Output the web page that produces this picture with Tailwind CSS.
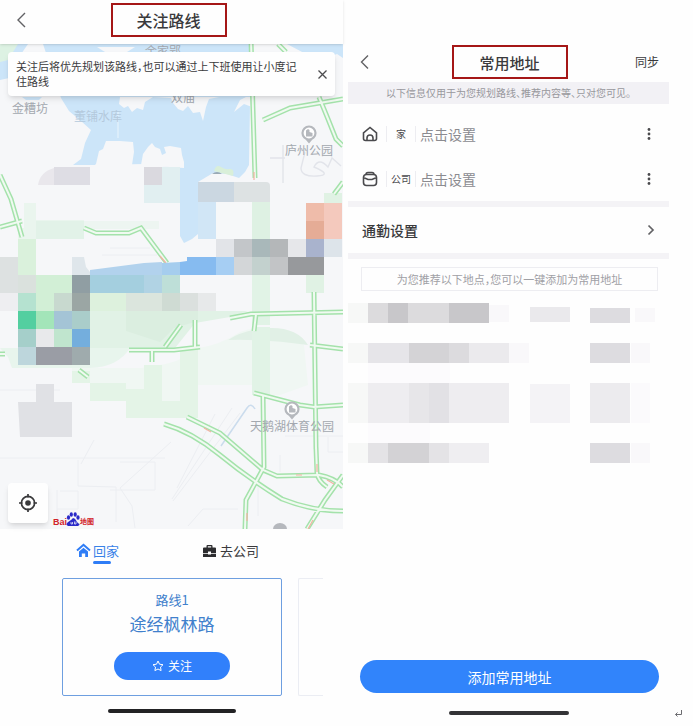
<!DOCTYPE html>
<html lang="zh-CN">
<head>
<meta charset="utf-8">
<meta name="viewport" content="width=device-width, initial-scale=1">
<title>关注路线 · 常用地址</title>
<script src="https://cdn.jsdelivr.net/npm/@tailwindcss/browser@4"></script>
</head>
<body class="bg-[#fefefe] text-[#3a3a3c] font-['Noto_Sans_CJK_SC',sans-serif] [font-feature-settings:'halt']">
<div class="grid grid-cols-[343fr_350fr] min-h-screen">

  <!-- Follow a route -->
  <main class="flex flex-col min-w-0">
    <header class="relative z-10 grid grid-cols-[1fr_auto_1fr] items-center h-11 pl-4 pr-[22px] pb-1 bg-[#fefefe] shadow-sm">
      <button aria-label="返回" class="justify-self-start">
        <svg class="w-3 h-4" viewBox="0 0 12 16" fill="none" stroke="#626265" stroke-width="1.4"><path d="M9 1 2 8l7 7"/></svg>
      </button>
      <h1 class="w-29 h-[34px] flex items-center justify-center border-2 border-[#a51717] text-base leading-none font-medium">关注路线</h1>
    </header>

    <section class="relative" aria-label="地图">
      <svg class="block w-full h-auto" viewBox="0 44 343 485">
        <rect y="44" width="343" height="485" fill="#f6f7f9"/>
        <!-- water -->
        <g fill="#cce5f9">
          <path d="M43 44H252V97l-2 8-1 60-4 7-6 6-12-4-14-1-15 9v52l-6 5-8 4-4-7V168l-36-4-48 1H73l8-6 4-16 6-13-10-9-12-10-8-13Z"/>
          <path d="M0 44h28L17 60 9 78 0 80Z"/>
          <path d="M22 97h20l-3 3H26Z"/>
          <path d="M287 44h56v14l-6-4-8 3-6 5-11-8-8-1Z"/>
        </g>
        <path d="M0 44h18L8 60 0 62Z" fill="#ddf2e3"/>
        <g fill="#f6f7f9">
          <path d="M91 168 96 164 99 151 103 149 106 141 120 141 133 142 134 152 132 165Z"/>
          <path d="M141 165 143 154 148 147 152 143 155 147 160 149 162 155 166 153 164 147 170 146 181 148 182 155 184 162 184 168Z"/>
          <path d="M82 97h38l-1 7 5 4 4-2 4 6 5-4 6 2 2-8 8-5 18 1 2 5 5 6 5 2 5-5 5 7 7-1 3 9 3-14 3-8 10-2H82Z"/>
          <path d="M234 112l6-12 6-3h6v10l-8-3Z"/>
          <path d="M97 47l38 0-8 5H105Z"/>
        </g>
        <path d="M118 112v26" stroke="#eaf5fc"/>
        <path d="M214 171q2-7 7-4t8 2q6-1 4 7Z" fill="#d9efd9"/>
        <path d="M212 174q5-4 10 0" fill="#9aaab5"/>

        <!-- minor streets -->
        <g fill="none" stroke="#eceef2">
          <path d="M0 458h165M78 460v26l38 1v35M120 462h35v28h-45M57 490v36M60 491h18v18H57M171 442 120 488l12 18 3 22M232 408l-60 91M240 413l-67 88M188 526l15-17h35M215 414l-38 74M94 440l-13 24M0 390h60M285 436h58M258 478v38M280 455v17M328 437v15h15M102 255h55M110 248h40"/>
          <path d="M305 152l-4 16q0 9 16 8t-3-9q5-10 14 0l4-9 9 8M270 158h15M283 145v38" stroke="#e2e4ea" stroke-width="1.4"/>
        </g>
        <path d="m221 446 26-38q4-6 8 1" fill="none" stroke="#cbdced" stroke-width="1.5"/>

        <!-- green fields -->
        <path d="M24 203h12v17h48v19H36v18H18v-29h6Z" fill="#eaf5ee"/>
        <path d="M36 221h48v18H36Z" fill="#e2f2e8"/>
        <path d="M84 221h75v8H84Z" fill="#edf5f1"/>
        <path d="M18 239h18v36H18Z" fill="#daf1dc"/>
        <path d="M0 348h130q-12 19-40 20H12L8 357Z" fill="#e8f5ed"/>
        <path d="M90 293h108l18 18h32l-18 6-35 6-20 25H90Z" fill="#e1f2e6"/>
        <path d="M126 311h72v10l-24 7-14 14-34-11Z" fill="#dbeee0"/>
        <path d="M150 366q30-2 48-18 22-3 42-16 30-12 64 13l4 40-28 10h-28v-10h-54v10h-18v20h-54v-17H90v-20H72v-10h70Z" fill="#f0f7f3"/>
        <path d="M228 340q15-10 41-12 28-1 39 17-40-6-80-5Z" fill="#e1f0e6"/>
        <path d="M72 371h18v12H72ZM90 383h36v18H90ZM126 389h36v29h-36ZM162 401h36v17h-36ZM180 348h18v53h-18ZM144 365h18v24h-18Z" fill="#e4f4e7"/>
        <path d="M252 275h18v50h-18ZM252 327h18v68h-18Z" fill="#e1f3e6"/>
        <path d="M306 275h18v18h-18ZM324 193h18v12h-18Z" fill="#e0f2e4"/>

        <!-- roads: coloured casing under a light centre line -->
        <defs>
          <g id="roads">
            <path d="M251 40 253 110 255 178M278 44l8 8M263 120 290 108 343 99M319 97l9 22 8 20 7 7M343 182l-9 12M0 175l11 24 11 38M0 227l22-6M84 228l12 5h33l12-5 26 35M230 318 251 314 343 312M314 292l2 157M256 314l-2 17M195 320v28M129 350h45l26-3M181 325l-16 22M152 351v11M0 354h5M79 370l9 7M310 345l33 4M316 447l1 26q1 8 10 14M254 393l46 12 14 2 29-2M263 395l1 72-18 33-1 29M164 424q28 8 56 31t62 44q30 12 61 12M187 417l33 16 43 37 14 6 42-1q16 3 24 12M343 475l-18 25-18 29"/>
          </g>
        </defs>
        <use href="#roads" fill="none" stroke="#a4e2ab" stroke-width="5"/>
        <use href="#roads" fill="none" stroke="#f0faf1" stroke-width="2"/>
        <g fill="none" stroke="#f2b2a3" stroke-width="1.200">
          <path d="M160 256l6 7M204 428l7 4M296 475h6M317 464v8M327 480l7 4M254 172v8M313 520l-5 9M247 513v8"/>
        </g>

        <!-- blurred mosaic cells -->
        <path d="M38 185q2-13 16-17v17Z" fill="#e9e7ec"/>
        <path d="M54 167h36v18H54Z" fill="#dedde4"/>
        <path d="M144 167h18v18h-18Z" fill="#dad9df"/>
        <path d="M162 167h18v36h-36v-18h18Z" fill="#e1eff1"/>
        <path d="M198 182h36v20h-36Z" fill="#cbd7e1"/>
        <path d="M234 182h32q4 0 4 4v16h-36Z" fill="#dde2e3"/>
        <path d="M198 202h18v37h-18Z" fill="#d1e6f6"/>
        <path d="M216 203h36v36h-36Z" fill="#f6f8f9"/>
        <path d="M252 202h18v37h-18Z" fill="#def1e3"/>
        <path d="M306 203h18v18h-18Z" fill="#efbcaa"/>
        <path d="M324 203h18v36h-18Z" fill="#f4c9bd"/>
        <path d="M306 221h18v18h-18Z" fill="#e5ac96"/>
        <path d="M216 239h18v18h-18Z" fill="#e2e4e8"/>
        <path d="M234 239h18v18h-18Z" fill="#c3c6c9"/>
        <path d="M252 239h18v18h-18Z" fill="#a9b8ba"/>
        <path d="M270 239h18v18h-18Z" fill="#b4b7b9"/>
        <path d="M288 239h18v18h-18Z" fill="#e6e7ea"/>
        <path d="M306 239h18v18h-18Z" fill="#a9b3cd"/>
        <path d="M324 239h18v18h-18Z" fill="#dde4ea"/>
        <path d="M234 257h18v18h-18Z" fill="#d3d6d8"/>
        <path d="M252 257h18v18h-18Z" fill="#c3d1ce"/>
        <path d="M270 257h18v18h-18Z" fill="#c2c4c6"/>
        <path d="M288 257h36v18h-36Z" fill="#97999c"/>
        <path d="M90 270l54-7 18-1v13H90Z" fill="#b2d2ed"/>
        <path d="M162 263l18-1v13h-18Z" fill="#a5cdee"/>
        <path d="M180 262l7-1v-4h29v18h-36Z" fill="#86bbf0"/>
        <path d="M216 257h18v18h-18Z" fill="#a6cef3"/>
        <path d="M90 275h54v18H90Z" fill="#a4cfdf"/>
        <path d="M144 275h18v18h-18Z" fill="#b1d3e4"/>
        <path d="M162 275h18v18h-18Z" fill="#bedfd8"/>
        <path d="M0 257h18v36H0Z" fill="#dde1e1"/>
        <path d="M18 275h18v18H18Z" fill="#dae1dd"/>
        <path d="M72 257h12l2 10 4 5v3H72Z" fill="#dfe6eb"/>
        <path d="M36 275h36v18H36Zm0 18h18v18H36Z" fill="#d2efd6"/>
        <path d="M72 275h18v18H72Z" fill="#909ea3"/>
        <path d="M72 293h18v18H72Z" fill="#9ba6a4"/>
        <path d="M18 293h18v18H18Z" fill="#b5e2d0"/>
        <path d="M54 293h18v18H54Z" fill="#c8d9cf"/>
        <path d="M90 293h36v18H90Z" fill="#ddf1dd"/>
        <path d="M126 293h36v18h-36Z" fill="#dbe5dd"/>
        <path d="M162 293h18v18h-18Z" fill="#cfdbd3"/>
        <path d="M180 293h18v18h-18Z" fill="#dbe0de"/>
        <path d="M198 293h18v18h-18Z" fill="#e7e9ea"/>
        <path d="M0 293h18v18H0Z" fill="#eeeef1"/>
        <path d="M18 311h18v18H18Z" fill="#53cfa0"/>
        <path d="M36 311h18v18H36Z" fill="#a3e5b9"/>
        <path d="M54 311h18v18H54Z" fill="#a4c4d6"/>
        <path d="M72 311h18v18H72Z" fill="#aacdca"/>
        <path d="M18 329h18v18H18Z" fill="#a5cfca"/>
        <path d="M36 329h18v18H36Z" fill="#e8e9eb"/>
        <path d="M54 329h18v18H54Z" fill="#c0e5ce"/>
        <path d="M72 329h18v18H72Z" fill="#74aedd"/>
        <path d="M18 347h18v18H18Z" fill="#bdd6dc"/>
        <path d="M36 347h36v18H36Z" fill="#9a9da5"/>
        <path d="M72 347h18v18H72Z" fill="#9fabad"/>
        <path d="M36 384h18v18h18v35H20l-2-35h18Z" fill="#e0e1e5"/>

        <!-- place labels -->
        <g fill="#a3a8af" font-size="12" text-anchor="middle">
          <text x="163" y="56">余家郢</text>
          <text x="30" y="113">金糟坊</text>
          <text x="183" y="102">双庙</text>
          <text x="98" y="121" fill="#b4c9dc">董铺水库</text>
          <text x="309" y="155">庐州公园</text>
          <text x="292" y="431">天鹅湖体育公园</text>
        </g>
        <g id="pin">
          <circle cx="309" cy="133" r="6.500" fill="#fff" stroke="#b5b8bd" stroke-width="2.200"/>
          <path d="M306 140h6l-3 3.500Z" fill="#b5b8bd"/>
          <path d="M306 136.500v-6l2-1.500 1.500 1v2l3 1v3.500Z" fill="#b5b8bd"/>
        </g>
        <use href="#pin" x="-17" y="276"/>
        <path d="M273 529a7 6 0 0 1 14 0Z" fill="#b5b8bd"/>
        <!-- map provider mark -->
        <g font-family="Liberation Sans, Noto Sans CJK SC, sans-serif" font-weight="bold" fill="#d2232a">
          <text x="53" y="525" font-size="9">Bai</text>
          <text x="80" y="524" font-size="7">地图</text>
        </g>
        <g fill="#2a2ac8">
          <path d="M73 518q2 0 3.500 3t3 3q0 2-3 2h-7q-3 0-3-2 1-2 3-3t3.500-3Z"/>
          <ellipse cx="68.500" cy="517.500" rx="1.600" ry="2.200"/>
          <ellipse cx="71.300" cy="514.500" rx="1.600" ry="2.300"/>
          <ellipse cx="75.200" cy="514.500" rx="1.600" ry="2.300"/>
          <ellipse cx="78" cy="517.500" rx="1.600" ry="2.200"/>
        </g>
        <path d="M71 522v2h1.500v-2M74.500 521.500v2.500h1.500v-2.500" stroke="#fff" stroke-width=".7" fill="none"/>
      </svg>

      <div role="status" class="absolute inset-x-2 top-2 flex items-center justify-between gap-4 rounded bg-[#fefefe] py-[7px] px-2 shadow-md">
        <p class="text-[11px] leading-[15px]">关注后将优先规划该路线，也可以通过上下班使用让小度记住路线</p>
        <button aria-label="关闭" class="shrink-0">
          <svg class="w-[9px] h-[9px]" viewBox="0 0 9 9" stroke="#4c4c4e" stroke-width="1.3"><path d="m.5.5 8 8m0-8-8 8"/></svg>
        </button>
      </div>
      <button aria-label="定位" class="absolute left-2 bottom-[6px] size-10 flex items-center justify-center rounded bg-[#fefefe] shadow-md">
        <svg class="size-5" viewBox="0 0 20 20" fill="none" stroke="#39393b" stroke-width="1.700"><circle cx="10" cy="10" r="6.600"/><circle cx="10" cy="10" r="2.800" fill="#39393b" stroke="none"/><path d="M10 1v3.500M10 15.500V19M1 10h3.500M15.500 10H19"/></svg>
      </button>
    </section>

    <nav class="flex items-start gap-[84px] pl-[76px] pt-3" aria-label="目的地">
      <a href="#home" class="flex gap-0.5 text-[13px] leading-5 text-[#3a82e8]">
        <svg class="w-[15px] h-[15px] mt-0.5" viewBox="0 0 15 15" fill="none" stroke="#2f7df6" stroke-width="2"><path d="m1 7.500 6.500-5.700L14 7.500"/><path d="M3 8.500 7.500 4.700 12 8.500V14H9.200v-3.500H5.800V14H3Z" fill="#2f7df6" stroke="none"/></svg>
        <span class="after:block after:h-[3px] after:w-[18px] after:rounded-full after:bg-[#2f7df6]">回家</span>
      </a>
      <a href="#work" class="flex gap-1 text-[13px] leading-5">
        <svg class="w-[13px] h-[13px] mt-1" viewBox="0 0 13 13" fill="#2c2c2e"><path d="M3.500 2.500V1q0-1 1-1h4q1 0 1 1v1.500H12q1 0 1 1V8H8V6.500H5V8H0V3.500q0-1 1-1Zm1.300 0h3.400V1.200H4.800ZM0 8.700h5v.8h3v-.8h5V12H0Z"/></svg>
        <span>去公司</span>
      </a>
    </nav>

    <div class="flex gap-4 pl-[62px] pr-5 pt-[14px] overflow-hidden">
      <article class="grow flex flex-col items-center h-[118px] pt-[11px] rounded-xs border border-[#6e9fe0] text-[#4080cc]">
        <p class="text-[13px] leading-5">路线1</p>
        <h2 class="text-[17px] leading-7">途经枫林路</h2>
        <button class="mt-[14px] w-29 h-7 flex items-center justify-center gap-1 rounded-full bg-[#3180fb] text-xs leading-none text-white">
          <svg class="size-3" viewBox="0 0 12 12" fill="none" stroke="#fff"><path d="m6 1 1.500 3.200 3.500.5-2.500 2.400.6 3.500L6 9l-3.100 1.600.6-3.500L1 4.700l3.500-.5Z"/></svg>关注
        </button>
      </article>
      <div class="w-[25px] shrink-0 h-[118px] rounded-l-xs border border-r-0 border-[#ebedf3]"></div>
    </div>
    <div class="w-32 h-1 mt-[13px] mx-auto rounded-full bg-[#222224]"></div>
  </main>

  <!-- Saved addresses -->
  <main class="flex flex-col min-w-0 pt-[42px] pl-[5px] pr-6">
    <header class="grid grid-cols-[1fr_auto_1fr] items-center h-10 pl-3 pr-[10px]">
      <button aria-label="返回" class="justify-self-start">
        <svg class="w-3 h-4" viewBox="0 0 12 16" fill="none" stroke="#626265" stroke-width="1.400"><path d="M8 1.500 1.500 8 8 14.500"/></svg>
      </button>
      <h1 class="w-29 h-[34px] flex items-center justify-center border-2 border-[#a51717] text-[15px] leading-none font-medium">常用地址</h1>
      <button class="justify-self-end text-xs leading-none">同步</button>
    </header>
    <p class="h-[22px] bg-[#f2f1f5] text-center text-[10px] leading-[22px] text-[#98989d]">以下信息仅用于为您规划路线、推荐内容等、只对您可见。</p>

    <ul class="pt-[7px] text-[14px] text-[#8b8b90]">
      <li class="flex items-center h-[45px] pl-[14px] pr-[18px]">
        <svg class="size-4" viewBox="0 0 16 16" fill="none" stroke="#4a4a4d" stroke-width="1.600"><path d="M1.500 6.800 8 1.500l6.500 5.300v5.700q0 2-2 2h-9q-2 0-2-2Z"/><path d="M5 14v-2q0-3 3-3t3 3v2"/></svg>
        <span class="w-[30px] h-4 ml-2 border-x border-[#ededf1] text-center text-[10px] leading-4 text-[#4a4a4d]">家</span>
        <a href="#set-home" class="ml-1 grow leading-5">点击设置</a>
        <button aria-label="更多：家"><svg class="w-1 h-3" viewBox="0 0 4 12" fill="#4a4a4d"><circle cx="2" cy="1.500" r="1.400"/><circle cx="2" cy="6" r="1.400"/><circle cx="2" cy="10.500" r="1.400"/></svg></button>
      </li>
      <li class="flex items-center h-[45px] pl-[14px] pr-[18px]">
        <svg class="size-4" viewBox="0 0 16 16" fill="none" stroke="#4a4a4d" stroke-width="1.600"><path d="M4 3.500q0-2 2-2h4q2 0 2 2M1.500 6.500q0-3 3-3h7q3 0 3 3v5q0 3-3 3h-7q-3 0-3-3ZM1.500 6.500 6 8.500h4l4.500-2M6 8.500h4"/></svg>
        <span class="w-[30px] h-4 ml-2 border-x border-[#ededf1] text-center text-[10px] leading-4 text-[#4a4a4d]">公司</span>
        <a href="#set-work" class="ml-1 grow leading-5">点击设置</a>
        <button aria-label="更多：公司"><svg class="w-1 h-3" viewBox="0 0 4 12" fill="#4a4a4d"><circle cx="2" cy="1.500" r="1.400"/><circle cx="2" cy="6" r="1.400"/><circle cx="2" cy="10.500" r="1.400"/></svg></button>
      </li>
    </ul>

    <a href="#commute" class="flex items-center justify-between h-[58px] px-[14px] border-y-6 border-[#f4f3f6] text-[14px] font-medium">
      <span>通勤设置</span>
      <svg class="w-2 h-3" viewBox="0 0 8 12" fill="none" stroke="#626265" stroke-width="1.700"><path d="m1.500 1.500 4.500 4.500-4.500 4.500"/></svg>
    </a>
    <p class="mt-2 ml-[13px] mr-[11px] h-6 border border-[#ededf1] text-center text-[11px] leading-[22px] text-[#a0a0a5]">为您推荐以下地点，您可以一键添加为常用地址</p>

    <!-- recommended places, masked -->
    <svg class="block w-full h-auto mt-3" viewBox="348 303 321 164" role="img" aria-label="推荐地点">
      <path d="M348 303h20v20h-20ZM348 343h20v20h-20ZM348 383h20v40h-20ZM348 443h20v20h-20Z" fill="#f7f8f7"/>
      <path d="M368 303h20v20h-20ZM408 303h41v20h-41Z" fill="#dcdbdd"/>
      <path d="M388 303h20v20h-20ZM449 303h40v20h-40Z" fill="#c8c7ca"/>
      <path d="M489 305h20v17h-20ZM635 308h20v14h-20ZM509 343h20v20h-20ZM631 343h19v20h-19ZM631 443h19v20h-19Z" fill="#f9f8fa"/>
      <path d="M530 307h40v15h-40Z" fill="#eae9ec"/>
      <path d="M590 308h40v15h-40ZM590 343h40v20h-40ZM590 443h40v20h-40Z" fill="#dddce0"/>
      <path d="M368 343h41v20h-41Z" fill="#e6e5e9"/>
      <path d="M409 343h40v20h-40Z" fill="#d4d3d6"/>
      <path d="M449 343h20v20h-20Z" fill="#dcdbde"/>
      <path d="M469 343h40v20h-40Z" fill="#ebeaed"/>
      <path d="M368 363h82v20h-82ZM368 423h62v20h-62Z" fill="#fcfbfd"/>
      <path d="M368 383h41v40h-41ZM449 383h60v40h-60Z" fill="#eeedf0"/>
      <path d="M409 383h20v40h-20Z" fill="#e7e6e9"/>
      <path d="M429 383h20v40h-20Z" fill="#e2e1e5"/>
      <path d="M530 384h40v39h-40Z" fill="#f4f3f6"/>
      <path d="M590 383h40v40h-40Z" fill="#ecebee"/>
      <path d="M631 383h19v40h-19Z" fill="#fbfafc"/>
      <path d="M368 443h20v20h-20ZM429 443h20v20h-20Z" fill="#e4e3e6"/>
      <path d="M388 443h41v20h-41Z" fill="#d3d2d5"/>
      <path d="M449 443h40v20h-40Z" fill="#efeef1"/>
    </svg>

    <button class="mt-auto ml-3 mr-[10px] h-[33px] rounded-full bg-[#3184fb] text-[14px] leading-none text-white">添加常用地址</button>
    <div class="relative mt-[18px] mb-[11px]">
      <div class="w-30 h-1 mx-auto rounded-full bg-[#333336]"></div>
      <svg class="absolute -right-[13px] -top-px w-2 h-2" viewBox="0 0 8 8" fill="none" stroke="#6c6c70" aria-hidden="true"><path d="M7.500 0v4.500H1.500M3.500 2.500l-2 2 2 2"/></svg>
    </div>
  </main>
</div>
</body>
</html>
